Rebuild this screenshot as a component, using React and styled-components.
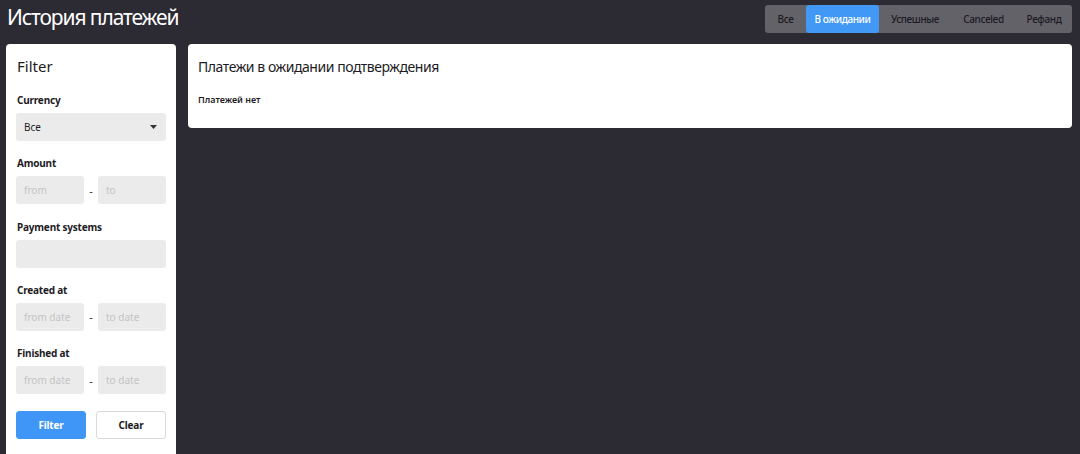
import React, { useState } from 'react';
import styled, { createGlobalStyle } from 'styled-components';

const GlobalStyle = createGlobalStyle`
  html, body {
    margin: 0;
    padding: 0;
    background: #2c2a33;
    font-family: 'Noto Sans', 'Open Sans', sans-serif;
  }
`;

const Page = styled.div`
  min-height: 454px;
  padding: 0 8px 0 6px;
  box-sizing: border-box;
  display: flex;
  flex-direction: column;
`;

const Header = styled.div`
  height: 44px;
  display: flex;
  align-items: flex-start;
  justify-content: space-between;
`;

const PageTitle = styled.h1`
  margin: 3px 0 0 1px;
  font-size: 21px;
  font-weight: 400;
  color: #ffffff;
  letter-spacing: -1.1px;
`;

const Tabs = styled.div`
  margin-top: 5px;
  height: 28px;
  display: flex;
  background: #646269;
  border-radius: 3px;
`;

const Tab = styled.button`
  border: none;
  height: 28px;
  width: ${(p) => p.$w}px;
  padding: 0;
  font-family: inherit;
  font-size: 10px;
  font-weight: 500;
  letter-spacing: -0.4px;
  color: ${(p) => (p.$active ? '#ffffff' : '#1c1a22')};
  background: ${(p) => (p.$active ? '#4299f5' : 'transparent')};
  border-radius: 3px;
  cursor: pointer;
`;

const Body = styled.div`
  flex: 1;
  display: flex;
  align-items: flex-start;
  gap: 12px;
`;

const FilterPanel = styled.aside`
  width: 170px;
  align-self: stretch;
  background: #ffffff;
  border-radius: 4px 4px 0 0;
  padding: 12px 10px 14px;
  box-sizing: border-box;
`;

const FilterTitle = styled.h2`
  margin: 0 0 17px 1px;
  font-size: 15px;
  font-weight: 400;
  color: #1d1b24;
`;

const Field = styled.div`
  margin-bottom: 15.3px;
`;

const Label = styled.div`
  margin: 0 0 6px 1px;
  font-size: 10px;
  font-weight: 700;
  letter-spacing: -0.2px;
  color: #1d1b24;
`;

const Control = styled.div`
  height: 28px;
  border-radius: 3px;
  background: #ebebeb;
  display: flex;
  align-items: center;
  justify-content: space-between;
  padding: 0 9px 0 8px;
  box-sizing: border-box;
  font-size: 10px;
  color: #1d1b24;
`;

const Range = styled.div`
  display: flex;
  align-items: center;
  gap: 3px;
`;

const Input = styled.input`
  width: 0;
  flex: 1;
  height: 28px;
  border: none;
  border-radius: 3px;
  background: #ebebeb;
  padding: 0 8px;
  box-sizing: border-box;
  font-family: inherit;
  font-size: 10px;
  outline: none;

  &::placeholder {
    color: #c4c4c4;
  }
`;

const Dash = styled.span`
  width: 8px;
  font-size: 11px;
  color: #333;
  text-align: center;
`;

const Buttons = styled.div`
  display: flex;
  gap: 10px;
  margin-top: 17px;
`;

const Button = styled.button`
  flex: 1;
  height: 28px;
  border-radius: 3px;
  font-family: inherit;
  font-size: 10px;
  font-weight: 700;
  letter-spacing: -0.2px;
  cursor: pointer;
  border: 1px solid ${(p) => (p.$primary ? '#4096f7' : '#d9d9d9')};
  background: ${(p) => (p.$primary ? '#4096f7' : '#ffffff')};
  color: ${(p) => (p.$primary ? '#ffffff' : '#1d1b24')};
`;

const Card = styled.section`
  flex: 1;
  background: #ffffff;
  border-radius: 4px;
  padding: 13px 10px 22px;
`;

const CardTitle = styled.h3`
  margin: 0 0 17px;
  font-size: 14px;
  font-weight: 400;
  letter-spacing: -0.45px;
  color: #1d1b24;
`;

const Empty = styled.p`
  margin: 0;
  font-size: 9px;
  font-weight: 600;
  color: #1d1b24;
`;

const tabs = [
  { id: 'all', label: 'Все', w: 41 },
  { id: 'pending', label: 'В ожидании', w: 73 },
  { id: 'success', label: 'Успешные', w: 72 },
  { id: 'canceled', label: 'Canceled', w: 65 },
  { id: 'refund', label: 'Рефанд', w: 56 },
];

function Caret() {
  return (
    <svg width="7" height="4" viewBox="0 0 7 4">
      <path d="M0 0h7L3.5 4z" fill="#333" />
    </svg>
  );
}

export default function App() {
  const [active, setActive] = useState('pending');

  return (
    <Page>
      <GlobalStyle />
      <Header>
        <PageTitle>История платежей</PageTitle>
        <Tabs>
          {tabs.map((t) => (
            <Tab key={t.id} $w={t.w} $active={active === t.id} onClick={() => setActive(t.id)}>
              {t.label}
            </Tab>
          ))}
        </Tabs>
      </Header>
      <Body>
        <FilterPanel>
          <FilterTitle>Filter</FilterTitle>
          <Field>
            <Label>Currency</Label>
            <Control>
              Все
              <Caret />
            </Control>
          </Field>
          <Field>
            <Label>Amount</Label>
            <Range>
              <Input placeholder="from" />
              <Dash>-</Dash>
              <Input placeholder="to" />
            </Range>
          </Field>
          <Field>
            <Label>Payment systems</Label>
            <Control />
          </Field>
          <Field>
            <Label>Created at</Label>
            <Range>
              <Input placeholder="from date" />
              <Dash>-</Dash>
              <Input placeholder="to date" />
            </Range>
          </Field>
          <Field>
            <Label>Finished at</Label>
            <Range>
              <Input placeholder="from date" />
              <Dash>-</Dash>
              <Input placeholder="to date" />
            </Range>
          </Field>
          <Buttons>
            <Button $primary>Filter</Button>
            <Button>Clear</Button>
          </Buttons>
        </FilterPanel>
        <Card>
          <CardTitle>Платежи в ожидании подтверждения</CardTitle>
          <Empty>Платежей нет</Empty>
        </Card>
      </Body>
    </Page>
  );
}
